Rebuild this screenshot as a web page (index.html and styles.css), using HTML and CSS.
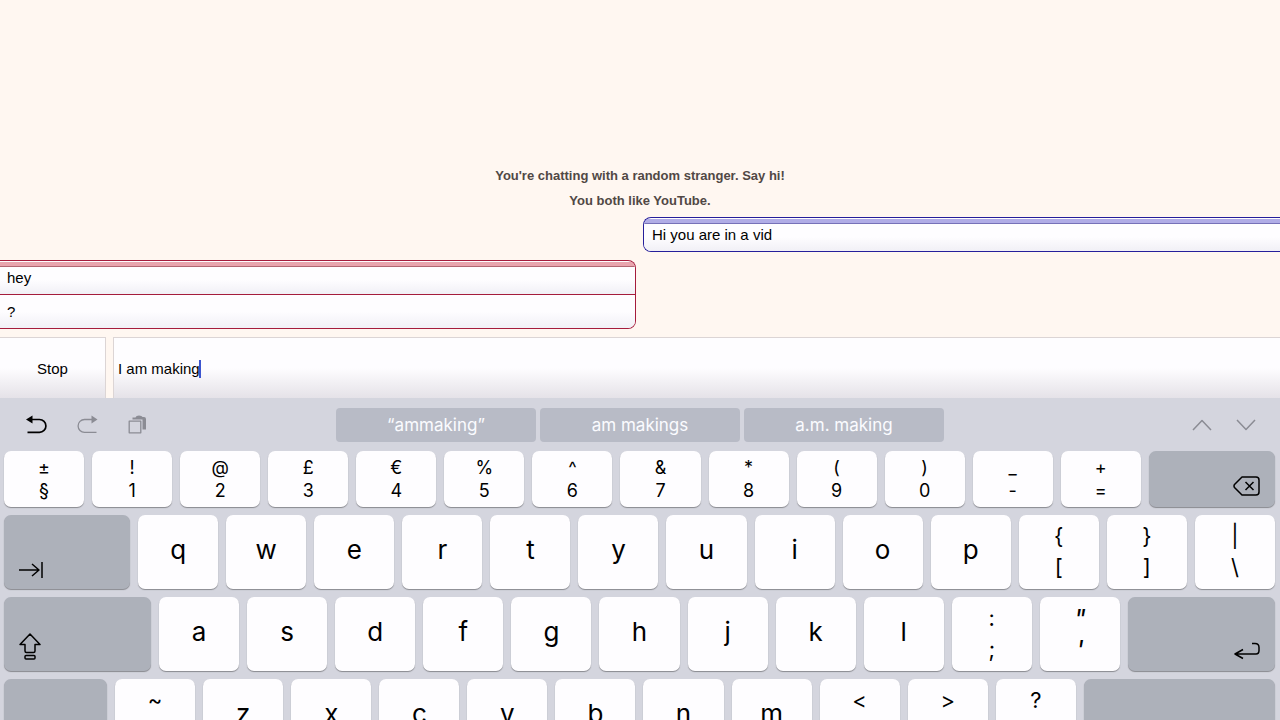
FILE: index.html
```html
<!DOCTYPE html>
<html lang="en">
<head>
    <meta charset="UTF-8">
    <meta name="viewport" content="width=device-width, initial-scale=1.0">
    <title>Chat</title>
    <link rel="stylesheet" href="styles.css">
</head>
<body>
    <main id="chat">
        <p class="status">You're chatting with a random stranger. Say hi!</p>
        <p class="status">You both like YouTube.</p>
        <div class="bubble you">
            <p>Hi you are in a vid</p>
        </div>
        <div class="bubble stranger">
            <p>hey</p>
            <p>?</p>
        </div>
    </main>

    <form id="composer">
        <button type="button" class="stop">Stop</button>
        <div class="field">
            <input type="text" value="I am making" aria-label="Message">
            <span class="caret"></span>
        </div>
    </form>

    <div id="keyboard">
        <div class="toolbar">
            <div class="tools">
                <button aria-label="Undo"><svg width="22" height="20" viewBox="0 0 22 20"><path d="M6 4.500H13.500a6.300 6.300 0 0 1 0 12.800H1.500" stroke-width="1.700"/><path d="M0 4.500L6.500 .500V8.500Z" class="solid"/></svg></button>
                <button aria-label="Redo" class="dim"><svg width="22" height="20" viewBox="0 0 22 20"><path d="M15 4.500H7.500a6.300 6.300 0 0 0 0 12.800H19.500" stroke-width="1.300"/><path d="M20.500 4.500L14.500 .500V8.500Z" class="solid"/></svg></button>
                <button aria-label="Paste" class="dim"><svg width="20" height="20" viewBox="0 0 20 20"><path d="M1.200 6.200H12.800V17.800H1.200Z" stroke-width="1.300"/><path d="M4.500 4.500V2.500H7.500Q8 .500 11 .500T14.500 2H16Q18 2 18 4V14.500H14.500V4.500Z" class="solid"/></svg></button>
            </div>
            <div class="suggestions">
                <button>“ammaking”</button>
                <button>am makings</button>
                <button>a.m. making</button>
            </div>
            <div class="arrows">
                <button aria-label="Previous"><svg width="20" height="12" viewBox="0 0 20 12"><path d="M1 11L10 1.500L19 11"/></svg></button>
                <button aria-label="Next"><svg width="20" height="12" viewBox="0 0 20 12"><path d="M1 1L10 10.500L19 1"/></svg></button>
            </div>
        </div>

        <div class="row numbers">
            <button class="key pair"><span>±</span><span>§</span></button>
            <button class="key pair"><span>!</span><span>1</span></button>
            <button class="key pair"><span>@</span><span>2</span></button>
            <button class="key pair"><span>£</span><span>3</span></button>
            <button class="key pair"><span>€</span><span>4</span></button>
            <button class="key pair"><span>%</span><span>5</span></button>
            <button class="key pair"><span>^</span><span>6</span></button>
            <button class="key pair"><span>&amp;</span><span>7</span></button>
            <button class="key pair"><span>*</span><span>8</span></button>
            <button class="key pair"><span>(</span><span>9</span></button>
            <button class="key pair"><span>)</span><span>0</span></button>
            <button class="key pair"><span>_</span><span>-</span></button>
            <button class="key pair"><span>+</span><span>=</span></button>
            <button class="key special right delete" aria-label="Delete"><svg width="27" height="20" viewBox="0 0 27 20"><path d="M9 1H23Q26 1 26 4V16Q26 19 23 19H9L1.500 11.500Q.500 10 1.500 8.500Z"/><path d="M12.500 6L20.500 14M20.500 6L12.500 14"/></svg></button>
        </div>

        <div class="row">
            <button class="key special tab" aria-label="Tab"><svg width="24" height="16" viewBox="0 0 24 16"><path d="M0 8H20M13 2L20 8L13 14M23 0V16"/></svg></button>
            <button class="key">q</button>
            <button class="key">w</button>
            <button class="key">e</button>
            <button class="key">r</button>
            <button class="key">t</button>
            <button class="key">y</button>
            <button class="key">u</button>
            <button class="key">i</button>
            <button class="key">o</button>
            <button class="key">p</button>
            <button class="key pair"><span>{</span><span>[</span></button>
            <button class="key pair"><span>}</span><span>]</span></button>
            <button class="key pair"><span>|</span><span>\</span></button>
        </div>

        <div class="row">
            <button class="key special caps" aria-label="Caps lock"><svg width="22" height="27" viewBox="0 0 22 27"><path d="M11 1L21 11.500H16V18Q16 19.500 14.500 19.500H7.500Q6 19.500 6 18V11.500H1Z"/><rect x="6" y="22.500" width="10" height="3.500" rx="1"/></svg></button>
            <button class="key">a</button>
            <button class="key">s</button>
            <button class="key">d</button>
            <button class="key">f</button>
            <button class="key">g</button>
            <button class="key">h</button>
            <button class="key">j</button>
            <button class="key">k</button>
            <button class="key">l</button>
            <button class="key pair"><span>:</span><span>;</span></button>
            <button class="key pair slanted"><span>"</span><span>'</span></button>
            <button class="key special right return" aria-label="Return"><svg width="26" height="18" viewBox="0 0 26 18"><path d="M18 1.500H21Q25 1.500 25 5.500V8.500Q25 12 22 12H1M9 7.500L1 12L9 16.500"/></svg></button>
        </div>

        <div class="row">
            <button class="key special shift" aria-label="Shift"></button>
            <button class="key pair"><span>~</span><span>`</span></button>
            <button class="key">z</button>
            <button class="key">x</button>
            <button class="key">c</button>
            <button class="key">v</button>
            <button class="key">b</button>
            <button class="key">n</button>
            <button class="key">m</button>
            <button class="key pair"><span>&lt;</span><span>,</span></button>
            <button class="key pair"><span>&gt;</span><span>.</span></button>
            <button class="key pair"><span>?</span><span>/</span></button>
            <button class="key special shift-right" aria-label="Right shift"></button>
        </div>
    </div>
</body>
</html>
```

FILE: styles.css
```css
* {
    box-sizing: border-box;
}
body {
    margin: 0;
    height: 100vh;
    overflow: hidden;
    display: flex;
    flex-direction: column;
    background: #fff7f1;
    font-family: "Liberation Sans", Arial, sans-serif;
    font-size: 15px;
    color: #000;
}
p {
    margin: 0;
}
button, input {
    font: inherit;
    color: inherit;
    border: none;
    padding: 0;
    margin: 0;
}
svg {
    display: block;
    fill: none;
    stroke: currentColor;
    stroke-width: 1.5;
    stroke-linejoin: round;
}
svg .solid {
    fill: currentColor;
    stroke: none;
}

/* conversation */
#chat {
    flex: 1;
    min-height: 0;
    display: flex;
    flex-direction: column;
    justify-content: flex-end;
    padding-bottom: 8px;
}
.status {
    font-size: 13px;
    font-weight: bold;
    line-height: 25px;
    text-align: center;
    color: #514845;
}
.bubble {
    width: calc(50% - 4px);
    padding-top: 1px;
    border: 1px solid;
    overflow: hidden;
    background: #fefdff;
}
.bubble p {
    height: 34px;
    line-height: 34px;
    padding: 0 7px;
    background: linear-gradient(#fefdff 50%, #f1f0f6);
}
.bubble p:first-child {
    height: 32px;
    line-height: 23px;
    border-top: 4px solid;
}
.you {
    align-self: flex-end;
    width: calc(50% - 3px);
    margin: 4px 0 8px;
    border-color: #261f9b;
    border-right: none;
    border-radius: 8px 0 0 8px;
}
.you p:first-child {
    padding-left: 8px;
    border-top-color: #b0ace6;
    box-shadow: inset 0 1px #7671b8;
}
.stranger {
    border-color: #a51c3c;
    border-left: none;
    border-radius: 0 8px 8px 0;
}
.stranger p:first-child {
    border-top-color: #e9a5ae;
    box-shadow: inset 0 1px #b46672;
}
.stranger p + p {
    border-top: 1px solid #a51c3c;
}

/* message box */
#composer {
    flex: none;
    display: flex;
    gap: 7px;
    height: 61px;
}
.stop, .field {
    border: 1px solid #dcd5d5;
    border-bottom: none;
    background: linear-gradient(#fefdff 50%, #e5e2e8);
}
.stop {
    width: 106px;
    border-left: none;
}
.field {
    position: relative;
    flex: 1;
    border-right: none;
}
.field input {
    width: 100%;
    height: 100%;
    padding: 0 4px;
    background: none;
    outline: none;
}
.caret {
    position: absolute;
    left: 85px;
    top: 22px;
    width: 2px;
    height: 18px;
    background: #3c55cf;
}

/* keyboard */
#keyboard {
    flex: none;
    height: 322px;
    overflow: hidden;
    background: #d4d5de;
    font-family: Inter, Roboto, sans-serif;
}
.toolbar {
    display: grid;
    grid-template-columns: 1fr auto 1fr;
    align-items: center;
    height: 53px;
    padding: 0 24px;
}
.toolbar button {
    background: none;
}
.tools {
    display: flex;
    gap: 29px;
    padding-left: 2px;
}
.tools .dim, .arrows {
    color: #8b8c94;
}
.suggestions {
    display: flex;
    gap: 4px;
}
.toolbar .suggestions button {
    width: 200px;
    height: 34px;
    border-radius: 4px;
    background: #b8bbc6;
    color: #fbfbff;
    font-size: 17px;
}
.arrows {
    display: flex;
    justify-content: flex-end;
    gap: 24px;
}
.row {
    display: flex;
    gap: 8px;
    height: 74px;
    margin-bottom: 8px;
    padding: 0 5px 0 4px;
}
.numbers {
    height: 56px;
}
.key {
    flex: 80 1 0;
    min-width: 0;
    padding-bottom: 4px;
    border-radius: 7px;
    background: #fefdff;
    box-shadow: 0 1px 1px #898a90;
    font-size: 26px;
    line-height: 32px;
}
.pair {
    padding-bottom: 0;
    font-size: 22px;
    line-height: 31px;
}
.pair span {
    display: block;
}
.numbers .pair {
    padding-bottom: 1px;
    font-size: 18px;
    line-height: 23px;
}
.slanted {
    font-size: 26px;
    font-style: italic;
}
.special {
    display: flex;
    align-items: flex-end;
    padding-bottom: 11px;
    background: #adb1ba;
}
.special svg {
    margin: 0 15px;
}
.right {
    justify-content: flex-end;
}
.delete, .tab {
    flex-grow: 126;
}
.caps, .return {
    flex-grow: 147;
}
.shift {
    flex-grow: 103;
}
.shift-right {
    flex-grow: 191;
}
```
